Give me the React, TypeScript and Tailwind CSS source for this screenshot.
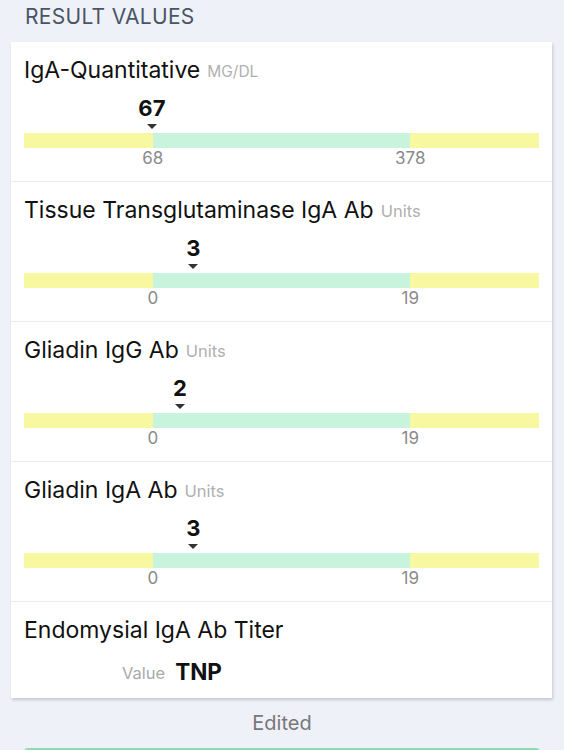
import React from "react";

type RangeResult = {
    name: string,
    unit: string,
    value: number,
    low: number,
    high: number,
    unitCaps?: boolean
}

const results: RangeResult[] = [
    { name: "IgA-Quantitative", unit: "MG/DL", value: 67, low: 68, high: 378, unitCaps: true },
    { name: "Tissue Transglutaminase IgA Ab", unit: "Units", value: 3, low: 0, high: 19 },
    { name: "Gliadin IgG Ab", unit: "Units", value: 2, low: 0, high: 19 },
    { name: "Gliadin IgA Ab", unit: "Units", value: 3, low: 0, high: 19 },
];

// normal range sits in the middle half of the bar
const toPercent = (value: number, low: number, high: number) => {
    const pct = 25 + ((value - low) / (high - low)) * 50;
    return Math.max(0, Math.min(100, pct));
}

const RangeRow: React.FC<{ result: RangeResult }> = ({ result }) => {
    const pos = toPercent(result.value, result.low, result.high);

    return (
        <div className="px-[13px] pt-[12px] pb-[13px] border-b border-[#ececec]">
            <div className="h-8 flex items-center">
                <span className="text-[23px] text-[#111]">{result.name}</span>
                <span className={`ml-[7px] mt-[3px] text-[#b0b0b0] ${result.unitCaps ? "text-[15.5px]" : "text-[16.5px]"}`}>{result.unit}</span>
            </div>

            <div className="relative h-[24px] mt-[10px]">
                <span
                    className="absolute top-0 -translate-x-1/2 text-[22px] font-bold leading-[24px] text-[#111]"
                    style={{ left: `${pos}%` }}
                >
                    {result.value}
                </span>
            </div>
            <div className="relative h-[5px] mt-[4px]">
                <span
                    className="absolute top-0 -translate-x-1/2 w-0 h-0 border-l-[5px] border-r-[5px] border-t-[5px] border-l-transparent border-r-transparent border-t-[#333]"
                    style={{ left: `${pos}%` }}
                />
            </div>

            <div className="flex h-[15px] mt-[4px]">
                <div className="w-1/4 bg-[#f8f8a0]" />
                <div className="w-1/2 bg-[#c8f3dc]" />
                <div className="w-1/4 bg-[#f8f8a0]" />
            </div>

            <div className="flex h-5 text-[17px] leading-5 text-[#8a8a8a]">
                <div className="w-1/4" />
                <div className="w-0 flex justify-center"><span>{result.low}</span></div>
                <div className="w-1/2" />
                <div className="w-0 flex justify-center"><span>{result.high}</span></div>
            </div>
        </div>
    )
}

const App: React.FC = () => {
    return (
        <div className="w-[564px] h-[750px] overflow-hidden bg-[#eff1f9]" style={{ fontFamily: "Inter, 'Liberation Sans', sans-serif" }}>
            <div className="h-[34px] pl-[25px] flex items-center text-[21px] text-[#4a5563] tracking-[0.3px]">
                RESULT VALUES
            </div>

            <div className="mx-[11px] mt-[8px] w-[541px] bg-white shadow-[1px_2px_3px_rgba(0,0,0,0.18)]">
                {results.map(r => (
                    <RangeRow key={r.name} result={r} />
                ))}
                <div className="px-[13px] pt-[12px] pb-[14px]">
                    <div className="h-8 flex items-center text-[23px] text-[#111]">Endomysial IgA Ab Titer</div>
                    <div className="h-6 mt-[14px] flex items-center pl-[98px]">
                        <span className="text-[16.5px] text-[#aaa] mt-[3px]">Value</span>
                        <span className="ml-[10px] text-[22.5px] font-bold text-[#111]">TNP</span>
                    </div>
                </div>
            </div>

            <div className="mt-[13px] text-center text-[20px] leading-6 text-[#777]">Edited</div>
            <div className="mx-[24px] mt-[13px] h-10 rounded-t-[4px] bg-[#8fdcb0]" />
        </div>
    )
}

export default App;
